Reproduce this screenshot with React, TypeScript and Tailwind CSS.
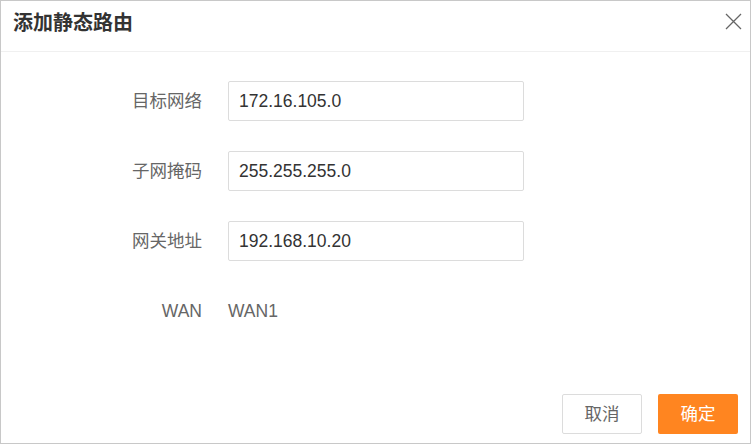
import { useState } from 'react';

const font = { fontFamily: '"Liberation Sans", "Noto Sans CJK SC", sans-serif' };

interface Field {
  label: string;
  value: string;
}

export default function App() {
  const [fields, setFields] = useState<Field[]>([
    { label: '目标网络', value: '172.16.105.0' },
    { label: '子网掩码', value: '255.255.255.0' },
    { label: '网关地址', value: '192.168.10.20' },
  ]);

  const update = (i: number, value: string) => {
    setFields((prev) => prev.map((f, idx) => (idx === i ? { ...f, value } : f)));
  };

  return (
    <div style={font} className="w-[751px] h-[444px] bg-white border border-[#c8c8c8] flex flex-col">
      {/* header */}
      <div className="h-[51px] shrink-0 flex items-center justify-between border-b border-[#f0f0f0] pl-[12px] pr-[7px]">
        <h2 className="text-[20px] font-bold text-[#333] leading-none -mt-[7px]">添加静态路由</h2>
        <button className="w-[20px] h-[20px] flex items-center justify-center -mt-[9px] text-[#666]">
          <svg width="17" height="17" viewBox="0 0 17 17" fill="none" stroke="currentColor" strokeWidth="1.3">
            <path d="M1 1L16 16M16 1L1 16" />
          </svg>
        </button>
      </div>

      {/* form */}
      <div className="flex-1 flex flex-col gap-[30px] pt-[29px]">
        {fields.map((f, i) => (
          <div key={f.label} className="flex items-center h-[40px]">
            <label className="w-[201px] text-right text-[17.5px] text-[#666]">{f.label}</label>
            <input
              value={f.value}
              onChange={(e) => update(i, e.target.value)}
              className="ml-[26px] w-[296px] h-[40px] border border-[#dcdcdc] rounded-[2px] pl-[10px] text-[17.5px] text-[#333] outline-none"
            />
          </div>
        ))}
        <div className="flex items-center h-[40px]">
          <span className="w-[201px] text-right text-[17.5px] text-[#666]">WAN</span>
          <span className="ml-[26px] text-[17.5px] text-[#666]">WAN1</span>
        </div>
      </div>

      {/* footer */}
      <div className="flex justify-end gap-[16px] pr-[12px] pb-[9px]">
        <button className="w-[80px] h-[40px] border border-[#dcdcdc] rounded-[2px] text-[17.5px] text-[#666] bg-white">取消</button>
        <button className="w-[80px] h-[40px] rounded-[2px] text-[17.5px] text-white bg-[#ff8520]">确定</button>
      </div>
    </div>
  );
}
